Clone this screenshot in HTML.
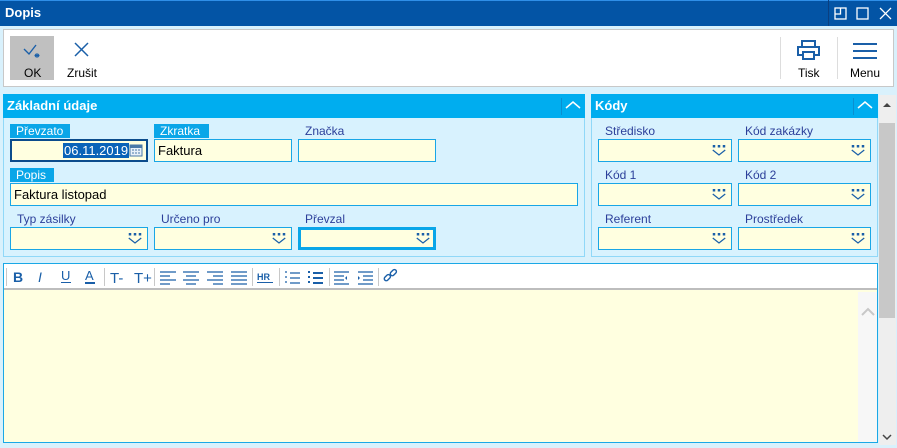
<!DOCTYPE html>
<html><head><meta charset="utf-8"><style>
*{box-sizing:border-box;margin:0;padding:0}
body{width:897px;height:448px;overflow:hidden;background:#d9f1fc;font-family:"Liberation Sans",sans-serif;font-size:12px;position:relative}
.a{position:absolute}
.inp{position:absolute;height:23px;background:#ffffe0;border:1px solid #19a6e6}
.lbl{position:absolute;color:#2b3f9a;font-size:12px}
.tab{position:absolute;height:14px;background:#0aa6e8;color:#fff;font-size:12px;line-height:14px;padding-left:6px}
.dd{position:absolute;right:6px;top:5px;transform:scale(1.25)}
.hdr{position:absolute;height:24px;background:#00adef;color:#fff;font-weight:bold;font-size:13px;line-height:24px;padding-left:4px}
.pan{position:absolute;background:#d8f2fe;border:1px solid #90d8f8}
</style></head><body>
<!-- title -->
<div class="a" style="left:0;top:0;width:897px;height:26px;background:#0354a5;border-top:1px solid #2f8fe8"></div>
<div class="a" style="left:5px;top:5px;color:#fff;font-weight:bold;font-size:13px">Dopis</div>
<div class="a" style="left:828px;top:0;width:1px;height:26px;background:#0a3f80"></div>
<svg class="a" style="left:834px;top:6px" width="60" height="16" fill="none" stroke="#fff" stroke-width="1.3">
<rect x="1" y="2" width="11" height="11"/><path d="M6.5 2v6H1"/>
<rect x="23" y="2" width="11" height="11"/>
<path d="M46 2l11 11M57 2L46 13"/></svg>
<!-- toolbar -->
<div class="a" style="left:3px;top:29px;width:891px;height:58px;background:#fff;border:1px solid #c8c8c8"></div>
<div class="a" style="left:10px;top:36px;width:44px;height:44px;background:#c0c0c0"></div>
<svg class="a" style="left:22px;top:43px" width="22" height="16" fill="none" stroke="#1a5fa8" stroke-width="1.4"><path d="M2 6l5 5 7-9"/><path d="M15 10v5M12.5 12.5h5M13 11l4 3M17 11l-4 3" stroke-width="1"/></svg>
<div class="a" style="left:24px;top:66px;font-size:12px">OK</div>
<svg class="a" style="left:73px;top:41px" width="18" height="18" stroke="#1a5fa8" stroke-width="1.5"><path d="M2 2l13 13M15 2L2 15"/></svg>
<div class="a" style="left:67px;top:66px;font-size:12px">Zrušit</div>
<div class="a" style="left:780px;top:37px;width:1px;height:42px;background:#ddd"></div>
<div class="a" style="left:837px;top:37px;width:1px;height:42px;background:#ddd"></div>
<svg class="a" style="left:796px;top:39px" width="26" height="22" fill="none" stroke="#1a5fa8" stroke-width="2"><path d="M6 7V2h13v5M6 16H2V8h21v8h-4"/><rect x="7" y="13" width="11" height="7"/></svg>
<div class="a" style="left:798px;top:66px">Tisk</div>
<svg class="a" style="left:853px;top:42px" width="26" height="18" stroke="#1a5fa8" stroke-width="2"><path d="M0 2h24M0 9h24M0 16h24"/></svg>
<div class="a" style="left:850px;top:66px">Menu</div>
<!-- left panel -->
<div class="pan" style="left:3px;top:94px;width:582px;height:163px"></div>
<div class="hdr" style="left:3px;top:94px;width:582px">Základní údaje</div>
<div class="a" style="left:561px;top:98px;width:1px;height:17px;background:#0a8fd0"></div>
<svg class="a" style="left:565px;top:100px" width="16" height="10" fill="none" stroke="#fff" stroke-width="1.5"><path d="M1 8l7-6 7 6"/></svg>
<div class="tab" style="left:10px;top:124px;width:60px">Převzato</div>
<div class="inp" style="left:10px;top:139px;width:138px;border:2px solid #0b4c8c"></div>
<div class="a" style="left:63px;top:143px;background:#0a63b8;color:#fff;font-size:13px;line-height:15px;padding:0 1px">06.11.2019</div>
<svg class="a" style="left:129px;top:143px" width="14" height="14"><rect x="1" y="2" width="12" height="11" fill="#e8f0f8" stroke="#4a79a8"/><rect x="1" y="2" width="12" height="3" fill="#4a79a8"/><path d="M3 7h2M6 7h2M9 7h2M3 10h2M6 10h2M9 10h2" stroke="#4a79a8"/></svg>
<div class="tab" style="left:154px;top:124px;width:55px">Zkratka</div>
<div class="inp" style="left:154px;top:139px;width:138px;padding:3px 3px;font-size:13px">Faktura</div>
<div class="lbl" style="left:305px;top:124px">Značka</div>
<div class="inp" style="left:298px;top:139px;width:138px"></div>
<div class="tab" style="left:10px;top:168px;width:44px">Popis</div>
<div class="inp" style="left:10px;top:183px;width:568px;padding:3px 3px;font-size:13px">Faktura listopad</div>
<div class="lbl" style="left:17px;top:212px">Typ zásilky</div>
<div class="lbl" style="left:161px;top:212px">Určeno pro</div>
<div class="lbl" style="left:305px;top:212px">Převzal</div>
<div class="inp" style="left:10px;top:227px;width:138px"><svg class="dd" width="12" height="10"><path d="M1 1h2v2H1zM5 1h2v2H5zM9 1h2v2H9z" fill="#1a5fa8"/><path d="M1 5l5 4 5-4" fill="none" stroke="#1a5fa8"/></svg></div>
<div class="inp" style="left:154px;top:227px;width:138px"><svg class="dd" width="12" height="10"><path d="M1 1h2v2H1zM5 1h2v2H5zM9 1h2v2H9z" fill="#1a5fa8"/><path d="M1 5l5 4 5-4" fill="none" stroke="#1a5fa8"/></svg></div>
<div class="inp" style="left:298px;top:227px;width:138px;border:3px solid #0aa6e8"><svg class="dd" style="right:4px;top:3px" width="12" height="10"><path d="M1 1h2v2H1zM5 1h2v2H5zM9 1h2v2H9z" fill="#1a5fa8"/><path d="M1 5l5 4 5-4" fill="none" stroke="#1a5fa8"/></svg></div>
<!-- right panel -->
<div class="pan" style="left:591px;top:94px;width:287px;height:163px"></div>
<div class="hdr" style="left:591px;top:94px;width:287px">Kódy</div>
<div class="a" style="left:853px;top:98px;width:1px;height:17px;background:#0a8fd0"></div>
<svg class="a" style="left:857px;top:100px" width="16" height="10" fill="none" stroke="#fff" stroke-width="1.5"><path d="M1 8l7-6 7 6"/></svg>
<div class="lbl" style="left:605px;top:124px">Středisko</div>
<div class="lbl" style="left:745px;top:124px">Kód zakázky</div>
<div class="lbl" style="left:605px;top:168px">Kód 1</div>
<div class="lbl" style="left:745px;top:168px">Kód 2</div>
<div class="lbl" style="left:605px;top:212px">Referent</div>
<div class="lbl" style="left:745px;top:212px">Prostředek</div>
<div class="inp" style="left:598px;top:139px;width:134px"><svg class="dd" width="12" height="10"><path d="M1 1h2v2H1zM5 1h2v2H5zM9 1h2v2H9z" fill="#1a5fa8"/><path d="M1 5l5 4 5-4" fill="none" stroke="#1a5fa8"/></svg></div>
<div class="inp" style="left:738px;top:139px;width:133px"><svg class="dd" width="12" height="10"><path d="M1 1h2v2H1zM5 1h2v2H5zM9 1h2v2H9z" fill="#1a5fa8"/><path d="M1 5l5 4 5-4" fill="none" stroke="#1a5fa8"/></svg></div>
<div class="inp" style="left:598px;top:183px;width:134px"><svg class="dd" width="12" height="10"><path d="M1 1h2v2H1zM5 1h2v2H5zM9 1h2v2H9z" fill="#1a5fa8"/><path d="M1 5l5 4 5-4" fill="none" stroke="#1a5fa8"/></svg></div>
<div class="inp" style="left:738px;top:183px;width:133px"><svg class="dd" width="12" height="10"><path d="M1 1h2v2H1zM5 1h2v2H5zM9 1h2v2H9z" fill="#1a5fa8"/><path d="M1 5l5 4 5-4" fill="none" stroke="#1a5fa8"/></svg></div>
<div class="inp" style="left:598px;top:227px;width:134px"><svg class="dd" width="12" height="10"><path d="M1 1h2v2H1zM5 1h2v2H5zM9 1h2v2H9z" fill="#1a5fa8"/><path d="M1 5l5 4 5-4" fill="none" stroke="#1a5fa8"/></svg></div>
<div class="inp" style="left:738px;top:227px;width:133px"><svg class="dd" width="12" height="10"><path d="M1 1h2v2H1zM5 1h2v2H5zM9 1h2v2H9z" fill="#1a5fa8"/><path d="M1 5l5 4 5-4" fill="none" stroke="#1a5fa8"/></svg></div>
<!-- editor -->
<div class="a" style="left:3px;top:263px;width:875px;height:180px;border:1px solid #1aa8e6;background:#ffffe0"></div>
<div class="a" style="left:4px;top:264px;width:873px;height:26px;background:#fff;border-bottom:2px solid #bdbdbd"></div>
<div class="a" style="left:858px;top:292px;width:19px;height:150px;background:#f7f7f7"></div>
<svg class="a" style="left:861px;top:307px" width="14" height="9" fill="none" stroke="#c8c8c8" stroke-width="2"><path d="M1 8l6-6 6 6"/></svg>
<svg class="a" style="left:0;top:266px" width="410" height="22">
<g stroke="#c8c8c8"><path d="M6.5 2v18M104.5 2v18M154.5 2v18M252.5 2v18M279.5 2v18M329.5 2v18M378.5 2v18"/></g>
<g fill="#1a5fa8" font-family="Liberation Sans" >
<text x="13" y="16" font-weight="bold" font-size="14">B</text>
<text x="38" y="16" font-style="italic" font-size="14">I</text>
<text x="61" y="14" font-size="13">U</text><rect x="61" y="16" width="10" height="1"/>
<text x="85" y="14" font-size="13">A</text><rect x="85" y="16" width="10" height="2"/>
<text x="110" y="17" font-size="15">T-</text>
<text x="134" y="17" font-size="15">T+</text>
<text x="257" y="14" font-size="9" font-weight="bold">HR</text><rect x="257" y="16" width="16" height="1"/>
</g>
<g stroke="#1a5fa8" stroke-width="1.3">
<path d="M160 6h16M160 10h10M160 14h16M160 18h10"/>
<path d="M183 6h16M186 10h10M183 14h16M186 18h10"/>
<path d="M207 6h16M213 10h10M207 14h16M213 18h10"/>
<path d="M231 6h16M231 10h16M231 14h16M231 18h16"/>
<path d="M290 7h10M290 12h10M290 17h10M285 6h2M285 11h2M285 16h2"/>
<path d="M313 7h10M313 12h10M313 17h10M308 6h2M308 11h2M308 16h2" stroke-width="2"/>
<path d="M334 6h15M334 10h10M334 14h10M334 18h15"/>
<path d="M358 6h15M363 10h10M363 14h10M358 18h15"/>
</g>
<path d="M347 10v4l-2-2zM358 10v4l2-2z" fill="#1a5fa8"/>
<g fill="none" stroke="#1a5fa8" stroke-width="1.4"><rect x="384" y="10" width="7" height="4" rx="2" transform="rotate(-45 387 12)"/><rect x="390" y="5" width="7" height="4" rx="2" transform="rotate(-45 393 7)"/></g>
</svg>
<!-- scrollbar -->
<div class="a" style="left:879px;top:95px;width:17px;height:350px;background:#eeeeee"></div>
<div class="a" style="left:879px;top:123px;width:16px;height:195px;background:#c8c8c8"></div>
<svg class="a" style="left:882px;top:101px" width="10" height="8" fill="#444"><path d="M1 6l4-4 4 4z"/></svg>
<svg class="a" style="left:882px;top:433px" width="10" height="8" fill="none" stroke="#444" stroke-width="1.5"><path d="M1 2l4 4 4-4"/></svg>
</body></html>
